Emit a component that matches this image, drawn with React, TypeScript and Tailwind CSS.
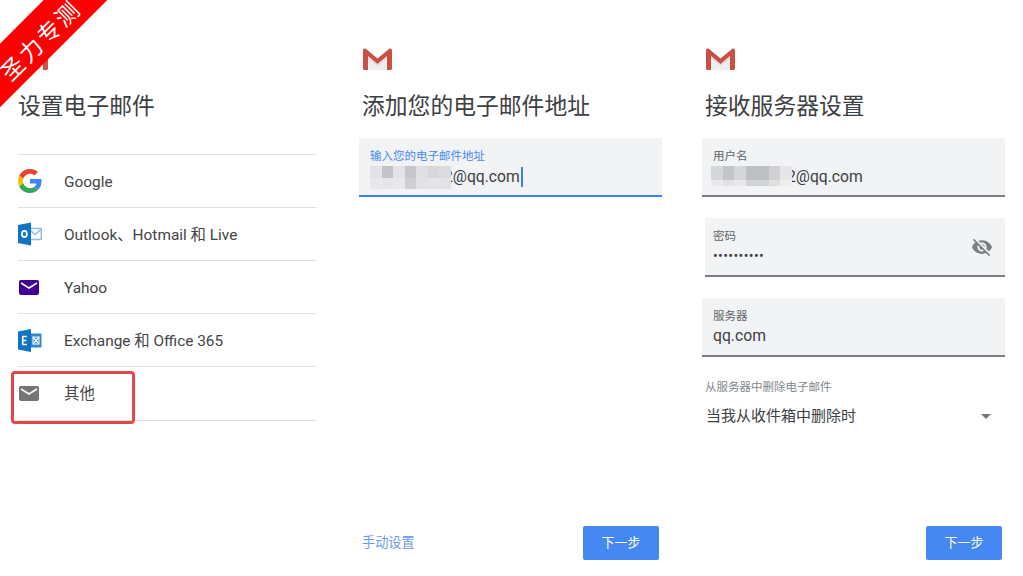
import React from 'react';

const FONT = { fontFamily: 'Roboto, "Noto Sans CJK SC", sans-serif' };

const GmailLogo = () => (
  <svg width="29" height="23" viewBox="0 0 29 23" className="block">
    <path d="M3 1l11.500 9.500L26 1l1 21H2z" fill="#eeeeee" />
    <path d="M5 9l9.500 7.500L24 9v1.500l-9.500 7.500L5 10.500z" fill="#dcdcdc" />
    <path d="M0 2.500C0 .8 1.600 0 3 1l11.500 9.500L26 1c1.400-1 3-.2 3 1.500V20.500c0 .9-.6 1.500-1.500 1.500H24V8l-9.500 8L5 8v14H1.500C.6 22 0 21.400 0 20.500z" fill="#cb5044" />
  </svg>
);

const GoogleIcon = () => (
  <svg width="24" height="24" viewBox="0 0 48 48">
    <path fill="#EA4335" d="M24 9.500c3.500 0 6.700 1.300 9.100 3.500l6.800-6.800C35.800 2.400 30.300 0 24 0 14.600 0 6.500 5.400 2.600 13.200l7.900 6.100C12.400 13.700 17.700 9.500 24 9.500z" />
    <path fill="#4285F4" d="M47 24.500c0-1.700-.2-3.300-.4-4.500H24v9h12.900c-.6 3-2.200 5.500-4.800 7.200l7.700 6C44.300 38 47 31.800 47 24.500z" />
    <path fill="#FBBC05" d="M10.500 28.700c-.5-1.400-.8-3-.8-4.700s.3-3.300.8-4.700l-7.900-6.100C.9 16.500 0 20.100 0 24s.9 7.500 2.600 10.800l7.900-6.100z" />
    <path fill="#34A853" d="M24 48c6.500 0 11.900-2.100 15.800-5.800l-7.700-6c-2.100 1.400-4.900 2.300-8.100 2.300-6.300 0-11.600-4.200-13.500-9.800l-7.900 6.100C6.500 42.600 14.600 48 24 48z" />
  </svg>
);

const OutlookIcon = () => (
  <svg width="24" height="24" viewBox="0 0 24 24">
    <rect x="11" y="6.500" width="12.300" height="11" rx="0.500" fill="#ffffff" stroke="#8dbde3" strokeWidth="1.400" />
    <path d="M11 7l6.200 5.500L23.300 7" fill="none" stroke="#8dbde3" strokeWidth="1.400" />
    <path d="M0 3L13 .5v23L0 21z" fill="#0f74c4" />
    <ellipse cx="6.400" cy="12" rx="2.400" ry="3.200" fill="none" stroke="#ffffff" strokeWidth="1.800" />
  </svg>
);

const YahooIcon = () => (
  <svg width="20" height="15" viewBox="0 0 20 15" className="ml-[1px]">
    <rect width="20" height="15" rx="2" fill="#410093" />
    <path d="M2 3L10 8l8-5" fill="none" stroke="#ffffff" strokeWidth="1.500" />
  </svg>
);

const ExchangeIcon = () => (
  <svg width="24" height="23" viewBox="0 0 24 23">
    <rect x="12" y="4.500" width="11.500" height="14" rx="1" fill="#2f86cc" />
    <path d="M15 8l6 7M21 8l-6 7" stroke="#ffffff" strokeWidth="1.200" />
    <rect x="15" y="8" width="6" height="7" fill="none" stroke="#ffffff" strokeWidth="1" />
    <path d="M0 2.500L13 0v23L0 20.500z" fill="#0f74c4" />
    <path d="M4.500 7.500h4.300M4.500 11.500h3.800M4.500 15.500h4.300M4.700 7.500v8" fill="none" stroke="#ffffff" strokeWidth="1.600" />
  </svg>
);

const MailIcon = () => (
  <svg width="20" height="15" viewBox="0 0 20 15" className="ml-[1px]">
    <rect width="20" height="15" rx="2" fill="#757575" />
    <path d="M2 3L10 8l8-5" fill="none" stroke="#ffffff" strokeWidth="1.500" />
  </svg>
);

const EyeOffIcon = () => (
  <svg width="22" height="22" viewBox="0 0 24 24" fill="#7b7f83">
    <path d="M12 7c2.760 0 5 2.240 5 5 0 .65-.13 1.260-.36 1.830l2.920 2.920c1.510-1.260 2.700-2.890 3.430-4.750-1.730-4.390-6-7.500-11-7.500-1.400 0-2.740.25-3.980.7l2.160 2.160C10.740 7.130 11.350 7 12 7zM2 4.270l2.280 2.280.46.46C3.080 8.300 1.780 10.020 1 12c1.730 4.390 6 7.500 11 7.500 1.550 0 3.030-.3 4.380-.84l.42.42L19.730 22 21 20.730 3.270 3 2 4.270zM7.530 9.800l1.550 1.550c-.05.21-.08.43-.08.65 0 1.660 1.340 3 3 3 .22 0 .44-.03.65-.08l1.550 1.550c-.67.33-1.410.53-2.200.53-2.760 0-5-2.240-5-5 0-.79.2-1.530.53-2.200zm4.310-.78l3.150 3.150.02-.16c0-1.660-1.340-3-3-3l-.17.010z" />
  </svg>
);

// pixelated mosaic that hides the address
const Mosaic = ({ cells, rows }: { cells: string[]; rows: string }) => (
  <span className={`relative z-10 grid h-[23px] w-[81px] grid-cols-7 ${rows}`}>
    {cells.map((c, i) => (
      <span key={i} style={{ backgroundColor: c }} />
    ))}
  </span>
);

const MOSAIC_A = ['#e3e3e5', '#c2c3c5', '#e3e3e5', '#c6c7c9', '#e0e0e2', '#d6d7d9', '#dcdcde', '#e8e8ea', '#e6e6e8', '#e8e8ea', '#cfd0d2', '#e2e2e4', '#e4e4e6', '#e4e4e6'];
const MOSAIC_B = ['#d6d7d9', '#c4c5c7', '#d6d7d9', '#bebfc1', '#bebfc1', '#cfd0d2', '#e6e6e8', '#e9e9eb', '#e2e2e4', '#e9e9eb', '#d2d3d5', '#d2d3d5', '#dfdfe1', '#eeeeef'];

const PROVIDERS = [
  { name: 'Google', icon: <GoogleIcon /> },
  { name: 'Outlook、Hotmail 和 Live', icon: <OutlookIcon /> },
  { name: 'Yahoo', icon: <YahooIcon /> },
  { name: 'Exchange 和 Office 365', icon: <ExchangeIcon /> },
  { name: '其他', icon: <MailIcon /> },
];

const Heading = ({ children }: { children: React.ReactNode }) => (
  <h1 className="mt-[22px] text-[22.8px] leading-[28px] font-normal text-[#3c4043]">{children}</h1>
);

const NextButton = () => (
  <button className="h-[34px] w-[76px] rounded-[2px] bg-[#4688f1] text-[13px] text-white">下一步</button>
);

export default function App() {
  return (
    <div className="relative flex h-[576px] w-[1023px] overflow-hidden bg-white" style={FONT}>
      {/* first screen */}
      <section className="ml-[18px] flex w-[298px] shrink-0 flex-col pt-[48px]">
        <div className="pl-[1px]"><GmailLogo /></div>
        <Heading>设置电子邮件</Heading>
        <ul className="mt-[33px] border-t border-[#e0e0e0]">
          {PROVIDERS.map((p) => (
            <li key={p.name} className="flex h-[53px] items-center border-b border-[#e0e0e0] last:h-[54px]">
              <span className="flex w-[46px] shrink-0 items-center">{p.icon}</span>
              <span className="pt-[3px] text-[15.4px] text-[#444444]">{p.name}</span>
            </li>
          ))}
        </ul>
      </section>

      {/* second screen */}
      <section className="ml-[43px] flex w-[303px] shrink-0 flex-col pt-[48px]">
        <div className="pl-[4px]"><GmailLogo /></div>
        <div className="pl-[3px]"><Heading>添加您的电子邮件地址</Heading></div>
        <div className="mt-[17px] h-[59px] border-b-2 border-[#3f80e6] bg-[#f1f3f4] pl-[11px] pt-[11px]">
          <div className="text-[11.5px] leading-[14px] text-[#4688f1]">输入您的电子邮件地址</div>
          <div className="mt-[2px] flex h-6 items-center text-[15.7px] text-[#3c4043]">
            <Mosaic cells={MOSAIC_A} rows="grid-rows-[12px_11px]" />
            <span className="-ml-[7px]">2@qq.com</span>
            <span className="ml-[1px] h-[20px] w-[2px] bg-[#3f80e6]" />
          </div>
        </div>
        <div className="mt-auto mb-[16px] flex items-center justify-between px-[3px]">
          <span className="text-[13.2px] text-[#6a9bec]">手动设置</span>
          <NextButton />
        </div>
      </section>

      {/* third screen */}
      <section className="ml-[40px] flex w-[303px] shrink-0 flex-col pt-[48px]">
        <div className="pl-[4px]"><GmailLogo /></div>
        <div className="pl-[3px]"><Heading>接收服务器设置</Heading></div>
        <div className="mt-[17px] h-[59px] border-b-2 border-[#7b7f83] bg-[#f1f3f4] pl-[11px] pt-[11px]">
          <div className="text-[11.5px] leading-[14px] text-[#5f6368]">用户名</div>
          <div className="mt-[2px] flex h-6 items-center text-[15.7px] text-[#3c4043]">
            <span className="-ml-[2px]"><Mosaic cells={MOSAIC_B} rows="grid-rows-[14px_6px]" /></span>
            <span className="-ml-[5px]">2@qq.com</span>
          </div>
        </div>
        <div className="ml-[3px] mt-[21px] flex h-[59px] items-center justify-between border-b-2 border-[#7b7f83] bg-[#f1f3f4] pl-[8px] pr-[12px]">
          <div>
            <div className="text-[11.5px] leading-[14px] text-[#5f6368]">密码</div>
            <div className="mt-[5px] text-[14px] leading-[16px] tracking-[0.4px] text-[#3c4043]">••••••••••</div>
          </div>
          <EyeOffIcon />
        </div>
        <div className="mt-[21px] h-[59px] border-b-2 border-[#7b7f83] bg-[#f1f3f4] pl-[11px] pt-[11px]">
          <div className="text-[11.5px] leading-[14px] text-[#5f6368]">服务器</div>
          <div className="mt-[1px] flex h-6 items-center text-[15.7px] text-[#3c4043]">qq.com</div>
        </div>
        <div className="mt-[23px] pl-[3px] text-[11.5px] leading-[14px] text-[#80868b]">从服务器中删除电子邮件</div>
        <div className="mt-[12px] flex items-center justify-between pl-[4px] pr-[14px] text-[15px] leading-[20px] text-[#3c4043]">
          <span>当我从收件箱中删除时</span>
          <span className="h-0 w-0 border-x-[5px] border-t-[5px] border-x-transparent border-t-[#757575]" />
        </div>
        <div className="mt-auto mb-[16px] flex justify-end pr-[3px]">
          <NextButton />
        </div>
      </section>

      {/* highlight around 其他 */}
      <div className="absolute left-[11px] top-[371px] h-[53px] w-[124px] rounded-[4px] border-[3px] border-[#e2474b]" />

      {/* corner ribbon */}
      <div className="absolute left-[-62px] top-[15px] flex h-[45px] w-[200px] -rotate-45 items-center justify-center bg-[#fe0000] pt-[10px] text-[23px] leading-none tracking-[2.5px] text-white">
        圣力专测
      </div>
    </div>
  );
}
